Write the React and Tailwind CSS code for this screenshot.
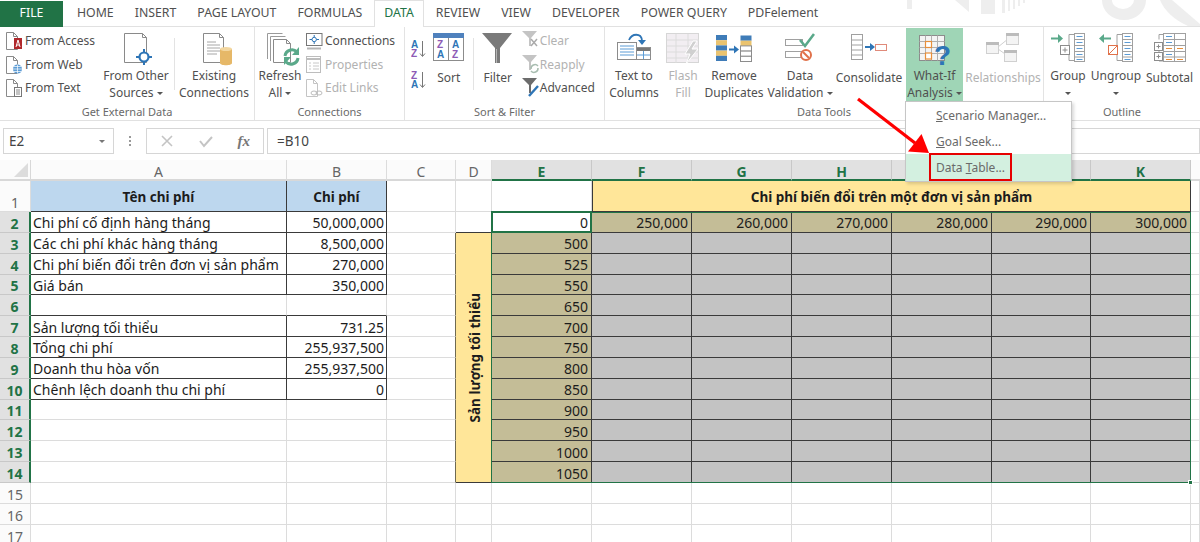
import React from "react";

const tabs = ["HOME", "INSERT", "PAGE LAYOUT", "FORMULAS", "DATA", "REVIEW", "VIEW", "DEVELOPER", "POWER QUERY", "PDFelement"];
const columns = ["A", "B", "C", "D", "E", "F", "G", "H", "I", "J", "K"];
const leftRows = {
  2: ["Chi phí cố định hàng tháng", "50,000,000"],
  3: ["Các chi phí khác hàng tháng", "8,500,000"],
  4: ["Chi phí biến đổi trên đơn vị sản phẩm", "270,000"],
  5: ["Giá bán", "350,000"],
  7: ["Sản lượng tối thiểu", "731.25"],
  8: ["Tổng chi phí", "255,937,500"],
  9: ["Doanh thu hòa vốn", "255,937,500"],
  10: ["Chênh lệch doanh thu chi phí", "0"],
};
const costs = ["250,000", "260,000", "270,000", "280,000", "290,000", "300,000"];
const volumes = [500, 525, 550, 650, 700, 750, 800, 850, 900, 950, 1000, 1050];

const grid = "border-r border-b border-[#dcdcdc]";
const dark = "border-r border-b border-[#3a3a3a]";

function Page({ x = 0.5, y = 0.5, w = 11, h = 17, stroke = "#8a8a8a" }) {
  return <path d={`M${x} ${y}h${w - 4}l4 4v${h - 4}h-${w}z M${x + w - 4} ${y}v4h4`} fill="#fff" stroke={stroke} />;
}

function FromAccessIcon() {
  return (
    <svg width="17" height="18" viewBox="0 0 17 18">
      <Page />
      <rect x="8" y="6" width="8" height="11" fill="#b0282c" />
      <path d="M10 15l2-7 2 7M10.8 13h2.4" stroke="#fff" fill="none" />
    </svg>
  );
}

function FromWebIcon() {
  return (
    <svg width="17" height="18" viewBox="0 0 17 18">
      <Page />
      <circle cx="11.5" cy="13" r="4.5" fill="#5b9bd5" />
      <path d="M7 13h9M11.5 8.5v9M8 10.5h7M8 15.5h7" stroke="#fff" strokeWidth=".7" />
    </svg>
  );
}

function FromTextIcon() {
  return (
    <svg width="17" height="18" viewBox="0 0 17 18">
      <Page />
      <rect x="8.5" y="8.5" width="7" height="9" fill="#fff" stroke="#777" />
      <path d="M10 11h4M10 13h4M10 15h4" stroke="#888" />
    </svg>
  );
}

function OtherSourcesIcon() {
  return (
    <svg width="34" height="32" viewBox="0 0 34 32">
      <Page x={5.5} y={0.5} w={22} h={29} />
      <circle cx="25" cy="24" r="4.5" fill="#fff" stroke="#2e75b6" strokeWidth="2.2" />
      <path d="M25 16v3M25 29v3M17 24h3M30 24h3" stroke="#2e75b6" strokeWidth="2" />
    </svg>
  );
}

function ExistingIcon() {
  return (
    <svg width="36" height="33" viewBox="0 0 36 33">
      <Page x={7.5} y={0.5} w={20} h={29} />
      <path d="M11 9h9M11 12h13M11 15h13M11 18h13M11 21h10" stroke="#a6a6a6" />
      <path d="M24 16h12v14c0 3-12 3-12 0z" fill="#e6b868" />
      <ellipse cx="30" cy="16" rx="6" ry="2" fill="#f3d7a0" />
    </svg>
  );
}

function RefreshIcon() {
  return (
    <svg width="40" height="33" viewBox="0 0 40 33">
      <g transform="translate(7 0)">
        <path d="M.5 26V.5h15M3.5 28V3.5h15" fill="none" stroke="#9a9a9a" />
        <Page x={6.5} y={6.5} w={17} h={23} />
        <path d="M18 23a7 7 0 0 1 12-4" fill="none" stroke="#5aa98a" strokeWidth="3" />
        <path d="M32 14v8h-7z" fill="#5aa98a" />
        <path d="M31 25a7 7 0 0 1-12 4" fill="none" stroke="#5aa98a" strokeWidth="3" />
        <path d="M17 32v-8h7z" fill="#5aa98a" />
      </g>
    </svg>
  );
}

function ConnectionsIcon() {
  return (
    <svg width="17" height="17" viewBox="0 0 17 17">
      <rect x=".5" y=".5" width="15.5" height="12" fill="#fff" stroke="#777" />
      <path d="M8.2 2v9M3.5 6.5h9.5" stroke="#2e75b6" />
      <circle cx="8.2" cy="6.5" r="2.2" fill="#fff" stroke="#2e75b6" />
      <path d="M1 15.5h14" stroke="#b5b5b5" strokeWidth="2" />
    </svg>
  );
}

function PropertiesIcon() {
  return (
    <svg width="17" height="17" viewBox="0 0 17 17">
      <rect x=".5" y=".5" width="14" height="16" fill="#fff" stroke="#bdbdbd" />
      <path d="M1 3h13" stroke="#bdbdbd" strokeWidth="2" />
      <path d="M3 7h2M3 10h2M3 13h2M7 7h6M7 10h6M7 13h6" stroke="#c8c8c8" />
    </svg>
  );
}

function EditLinksIcon() {
  return (
    <svg width="17" height="18" viewBox="0 0 17 18">
      <Page stroke="#c4c4c4" />
      <ellipse cx="8" cy="14" rx="3" ry="2" fill="#fff" stroke="#bdbdbd" />
      <ellipse cx="13" cy="14" rx="3" ry="2" fill="none" stroke="#bdbdbd" />
    </svg>
  );
}

function SortLettersIcon({ top, bottom, topColor, bottomColor }) {
  return (
    <svg width="16" height="20" viewBox="0 0 16 20">
      <text x="0" y="9" fontSize="10" fontWeight="700" fill={topColor} fontFamily="Liberation Sans">{top}</text>
      <text x="0" y="18" fontSize="10" fontWeight="700" fill={bottomColor} fontFamily="Liberation Sans">{bottom}</text>
      <path d="M11.5 2v15M9 14.5l2.5 3 2.5-3" fill="none" stroke="#777" />
    </svg>
  );
}

function SortIcon() {
  return (
    <svg width="32" height="29" viewBox="0 0 32 29">
      <rect x=".5" y=".5" width="30" height="27" fill="#fff" stroke="#8c8c8c" />
      <rect x="0" y="0" width="31" height="5" fill="#4f81bd" />
      <path d="M15.5 5v23" stroke="#8c8c8c" />
      <text x="4" y="15" fontSize="10" fontWeight="700" fill="#8e5ab5" fontFamily="Liberation Sans">Z</text>
      <text x="4" y="25" fontSize="10" fontWeight="700" fill="#2e75b6" fontFamily="Liberation Sans">A</text>
      <text x="19" y="15" fontSize="10" fontWeight="700" fill="#2e75b6" fontFamily="Liberation Sans">A</text>
      <text x="19" y="25" fontSize="10" fontWeight="700" fill="#8e5ab5" fontFamily="Liberation Sans">Z</text>
    </svg>
  );
}

function FilterIcon() {
  return (
    <svg width="31" height="31" viewBox="0 0 31 31">
      <path d="M0 0h30L18 15v15h-5V15z" fill="#7a7a7a" />
      <path d="M14.5 16v14" stroke="#b5b5b5" />
    </svg>
  );
}

function SmallFunnelIcon({ fill, children }) {
  return (
    <svg width="18" height="20" viewBox="0 0 18 20">
      <path d="M0 0h15l-6 7v8H7V7z" fill={fill} />
      {children}
    </svg>
  );
}

function TextColumnsIcon() {
  return (
    <svg width="34" height="27" viewBox="0 0 34 27">
      <rect x=".5" y="9.5" width="19" height="17" fill="#fff" stroke="#8c8c8c" />
      <path d="M3 13h14M3 16h14M3 19h14M3 22h14" stroke="#5b9bd5" />
      <path d="M12 7C15 0 24 0 25 7" fill="none" stroke="#2e75b6" strokeWidth="1.8" />
      <path d="M21 7h8l-4 5z" fill="#2e75b6" />
      <rect x="19.5" y="14.5" width="14" height="12" fill="#fff" stroke="#8c8c8c" />
      <rect x="20" y="15" width="13" height="3" fill="#777" />
      <path d="M26.5 18v8M20 22h13" stroke="#5b9bd5" />
    </svg>
  );
}

function FlashFillIcon() {
  return (
    <svg width="34" height="32" viewBox="0 0 34 32">
      <rect x=".5" y=".5" width="32" height="29" fill="#f2eef2" stroke="#d6d6d6" />
      <path d="M1 7h32M1 13h32M1 19h32M1 25h32M10 1v29M22 1v29" stroke="#dcdcdc" />
      <path d="M27 8l-8 13h5l-4 10 12-15h-6l5-8z" fill="#d0d0d0" stroke="#fff" />
    </svg>
  );
}

function RemoveDuplicatesIcon() {
  const rowsA = ["#3f7cb8", "#eac36f", "#3f7cb8", "#eac36f", "#3f7cb8"];
  const rowsB = ["#3f7cb8", "#eac36f", "#fff", "#fff", "#fff"];
  return (
    <svg className="mt-[2px]" width="36" height="27" viewBox="0 0 36 27">
      {rowsA.map((c, i) => (
        <rect key={i} x="0" y={i * 5.2} width="11" height="5.2" fill={c} />
      ))}
      {rowsB.map((c, i) => (
        <rect key={i} x="24.5" y={i * 5.2 + 0.5} width="11" height="5.2" fill={c} stroke={i < 2 ? "none" : "#8c8c8c"} />
      ))}
      <path d="M13 14.5h6" stroke="#2e75b6" strokeWidth="2" />
      <path d="M18 10.5l5 4-5 4z" fill="#2e75b6" />
    </svg>
  );
}

function DataValidationIcon() {
  return (
    <svg width="30" height="30" viewBox="0 0 30 30">
      <rect x=".5" y="6.5" width="17" height="6" fill="#fff" stroke="#a0a0a0" />
      <rect x=".5" y="18.5" width="17" height="6" fill="#fff" stroke="#a0a0a0" />
      <path d="M15 7l5 6 9-12" fill="none" stroke="#5aa98a" strokeWidth="2.6" />
      <circle cx="21" cy="22" r="5" fill="#fff" stroke="#e0714a" strokeWidth="2" />
      <path d="M18 19l6 6" stroke="#e0714a" strokeWidth="2" />
    </svg>
  );
}

function ConsolidateIcon() {
  return (
    <svg className="mt-px" width="36" height="27" viewBox="0 0 36 27">
      <rect x=".5" y=".5" width="11" height="25" fill="#fff" stroke="#a0a0a0" />
      <path d="M1 6h10M1 11h10M1 16h10M1 21h10" stroke="#a0a0a0" />
      <path d="M14 13h6" stroke="#2e75b6" strokeWidth="2" />
      <path d="M19 9l5 4-5 4z" fill="#2e75b6" />
      <rect x="24.5" y="10.5" width="11" height="6" fill="#fff" stroke="#e08a7a" />
    </svg>
  );
}

function WhatIfIcon() {
  return (
    <svg className="mt-[2px] overflow-visible" width="32" height="31" viewBox="0 0 32 31">
      <rect x=".5" y=".5" width="25" height="25" fill="#f4f4f4" stroke="#8c8c8c" />
      <path d="M.5 6.5h25M.5 12.5h25M.5 18.5h25M6.5 .5v25M12.5 .5v25M18.5 .5v25" stroke="#b0b0b0" />
      <rect x="6.5" y="6.5" width="6" height="6" fill="#fff" stroke="#e88f3a" strokeWidth="1.2" />
      <rect x="6.5" y="18" width="6" height="6" fill="#fff" stroke="#e88f3a" strokeWidth="1.2" />
      <text x="15" y="30" fontSize="28" fontWeight="700" fill="#2e75b6" fontFamily="Liberation Sans">?</text>
    </svg>
  );
}

function RelationshipsIcon() {
  return (
    <svg width="34" height="30" viewBox="0 0 34 30">
      <path d="M12 14l10-8M12 16l10 7" stroke="#d0d0d0" />
      <rect x=".5" y="9.5" width="12" height="11" fill="#f4f4f4" stroke="#d0d0d0" />
      <rect x="0" y="9" width="13" height="3" fill="#bcbcbc" />
      <rect x="20.5" y=".5" width="12" height="11" fill="#f4f4f4" stroke="#d0d0d0" />
      <rect x="20" y="0" width="13" height="3" fill="#bcbcbc" />
      <rect x="18.5" y="17.5" width="12" height="11" fill="#f4f4f4" stroke="#d0d0d0" />
      <rect x="18" y="17" width="13" height="3" fill="#bcbcbc" />
    </svg>
  );
}

function ListColumn({ x }) {
  return (
    <>
      <rect x={x + 0.5} y=".5" width="10" height="28" fill="#fff" stroke="#a0a0a0" />
      <path d={`M${x} 6.5h11M${x} 12.5h11M${x} 18.5h11M${x} 24h11`} stroke="#a0a0a0" />
      <path d={`M${x + 2.5} 3.5h6M${x + 2.5} 9.5h6M${x + 2.5} 15.5h6M${x + 2.5} 21.5h6M${x + 2.5} 26.5h6`} stroke="#5b9bd5" />
    </>
  );
}

function GroupIcon() {
  return (
    <svg width="34" height="29" viewBox="0 0 34 29">
      <path d="M24 1.5h-6v26h6" fill="none" stroke="#a0a0a0" />
      <path d="M0 5.5h8" stroke="#5aa98a" strokeWidth="2" />
      <path d="M7 1l5 4.5-5 4.5z" fill="#5aa98a" />
      <rect x="9.5" y="12.5" width="9" height="9" fill="#fff" stroke="#8c8c8c" />
      <path d="M11.5 17h5M14 14.5v5" stroke="#8c8c8c" />
      <ListColumn x={23} />
    </svg>
  );
}

function UngroupIcon() {
  return (
    <svg width="34" height="29" viewBox="0 0 34 29">
      <path d="M24 1.5h-6v26h6" fill="none" stroke="#a0a0a0" />
      <path d="M4 5.5h8" stroke="#5aa98a" strokeWidth="2" />
      <path d="M5 1L0 5.5 5 10z" fill="#5aa98a" />
      <rect x="9.5" y="12.5" width="9" height="9" fill="#fff" stroke="#e0714a" />
      <path d="M10 21l8-8" stroke="#e0714a" />
      <ListColumn x={23} />
    </svg>
  );
}

function SubtotalIcon() {
  return (
    <svg width="32" height="29" viewBox="0 0 32 29">
      <path d="M9 1.5H5v5M5 18v10h5" fill="none" stroke="#a0a0a0" />
      <rect x=".5" y="9.5" width="8" height="8" fill="#fff" stroke="#8c8c8c" />
      <rect x=".5" y="19.5" width="8" height="8" fill="#fff" stroke="#8c8c8c" />
      <path d="M2.5 13.5h4M4.5 11.5v4M2.5 23.5h4M4.5 21.5v4" stroke="#8c8c8c" />
      <rect x="9.5" y=".5" width="22" height="28" fill="#fff" stroke="#a0a0a0" />
      <path d="M9 6.5h23M9 12.5h23M9 18.5h23M9 24h23M20.5 1v28" stroke="#a0a0a0" />
      <path d="M12 3.5h6M12 9.5h6M12 21.5h6" stroke="#5b9bd5" />
      <path d="M23 15.5h6M23 26.5h6M12 15.5h6M12 26.5h6" stroke="#e88f3a" />
    </svg>
  );
}

function Caret() {
  return <span className="inline-block align-middle ml-[3px] w-0 h-0 border-x-[3px] border-t-[3px] border-x-transparent border-t-[#555]" />;
}

function BigButton({ w, icon, lines, caret, caretLine, dim, active }) {
  return (
    <div className={`flex flex-col items-center shrink-0 h-[73px] pt-[5px] ${active ? "bg-[#9fd5b6]" : ""}`} style={{ width: w }}>
      <div className="h-[36px] flex items-start justify-center">{icon}</div>
      <div className={`text-center leading-[17px] whitespace-nowrap ${dim ? "text-[#b2b2b2]" : "text-[#505050]"}`}>
        <div>{lines[0]}</div>
        <div>
          {lines[1]}
          {caret && lines[1] ? <Caret /> : null}
        </div>
        {caretLine ? <div className="h-[17px] -ml-[3px]"><Caret /></div> : null}
      </div>
    </div>
  );
}

function SmallButton({ icon, label, dim, iconW = "w-[18px]" }) {
  return (
    <div className="flex items-center h-[23.5px] whitespace-nowrap">
      <span className={`${iconW} shrink-0 flex items-center`}>{icon}</span>
      <span className={dim ? "text-[#b2b2b2]" : "text-[#505050]"}>{label}</span>
    </div>
  );
}

function RibbonGroup({ w, label, children, last }) {
  return (
    <div className={`relative flex flex-col justify-between shrink-0 h-[93px] ${last ? "" : "border-r border-[#e3e3e3]"}`} style={{ width: w }}>
      <div className="flex pt-px">{children}</div>
      <div className="text-center text-[11px] leading-[14px] text-[#6a6a6a] pb-px">{label}</div>
    </div>
  );
}

function Ribbon() {
  return (
    <div className="flex h-[94px] border-b border-[#e1e1e1] text-[12px]">
      <RibbonGroup w={255} label="Get External Data">
        <div className="ml-[6px] w-[97px] pt-[1.5px]">
          <SmallButton icon={<FromAccessIcon />} label="From Access" iconW="w-[19px]" />
          <SmallButton icon={<FromWebIcon />} label="From Web" iconW="w-[19px]" />
          <SmallButton icon={<FromTextIcon />} label="From Text" iconW="w-[19px]" />
        </div>
        <BigButton w={66} icon={<OtherSourcesIcon />} lines={["From Other", "Sources"]} caret />
        <div className="ml-[5px] mr-[4px] mt-[10px] h-[52px] border-l border-[#e3e3e3]" />
        <BigButton w={70} icon={<ExistingIcon />} lines={["Existing", "Connections"]} />
      </RibbonGroup>
      <RibbonGroup w={150} label="Connections">
        <BigButton w={50} icon={<RefreshIcon />} lines={["Refresh", "All"]} caret />
        <div className="ml-px w-[90px] pt-[1.5px]">
          <SmallButton icon={<ConnectionsIcon />} label="Connections" iconW="w-[19px]" />
          <SmallButton icon={<PropertiesIcon />} label="Properties" iconW="w-[19px]" dim />
          <SmallButton icon={<EditLinksIcon />} label="Edit Links" iconW="w-[19px]" dim />
        </div>
      </RibbonGroup>
      <RibbonGroup w={200} label="Sort & Filter">
        <div className="ml-[6px] w-[22px] pt-[11px] flex flex-col gap-[11px]">
          <SortLettersIcon top="A" bottom="Z" topColor="#2e75b6" bottomColor="#8e5ab5" />
          <SortLettersIcon top="Z" bottom="A" topColor="#8e5ab5" bottomColor="#2e75b6" />
        </div>
        <BigButton w={32} icon={<SortIcon />} lines={["Sort", ""]} />
        <div className="ml-[8px] mt-[10px] h-[52px] border-l border-[#e3e3e3]" />
        <BigButton w={48} icon={<FilterIcon />} lines={["Filter", ""]} />
        <div className="w-[83px] pt-[1.5px]">
          <SmallButton
            dim
            label="Clear"
            icon={
              <SmallFunnelIcon fill="#c4c4c4">
                <path d="M9 8l6 7M15 8l-6 7" stroke="#aaa" strokeWidth="1.5" />
              </SmallFunnelIcon>
            }
          />
          <SmallButton
            dim
            label="Reapply"
            icon={
              <SmallFunnelIcon fill="#c4c4c4">
                <path d="M9 14a4 4 0 0 1 7-3M16 13a4 4 0 0 1-7 3" fill="none" stroke="#a8bdb0" strokeWidth="1.5" />
              </SmallFunnelIcon>
            }
          />
          <SmallButton
            label="Advanced"
            icon={
              <SmallFunnelIcon fill="#6c6c6c">
                <path d="M7 18L16 8" stroke="#2e75b6" strokeWidth="2.4" />
              </SmallFunnelIcon>
            }
          />
        </div>
      </RibbonGroup>
      <RibbonGroup w={439} label="Data Tools">
        <BigButton w={58} icon={<TextColumnsIcon />} lines={["Text to", "Columns"]} />
        <BigButton w={40} icon={<FlashFillIcon />} lines={["Flash", "Fill"]} dim />
        <BigButton w={62} icon={<RemoveDuplicatesIcon />} lines={["Remove", "Duplicates"]} />
        <BigButton w={70} icon={<DataValidationIcon />} lines={["Data", "Validation"]} caret />
        <BigButton w={68} icon={<ConsolidateIcon />} lines={["Consolidate", ""]} />
        <div className="w-[3px]" />
        <BigButton w={57} icon={<WhatIfIcon />} lines={["What-If", "Analysis"]} caret active />
        <BigButton w={80} icon={<RelationshipsIcon />} lines={["Relationships", ""]} dim />
      </RibbonGroup>
      <RibbonGroup w={156} label="Outline" last>
        <BigButton w={48} icon={<GroupIcon />} lines={["Group", ""]} caretLine />
        <BigButton w={48} icon={<UngroupIcon />} lines={["Ungroup", ""]} caretLine />
        <BigButton w={59} icon={<SubtotalIcon />} lines={["Subtotal", ""]} />
      </RibbonGroup>
    </div>
  );
}

function Watermark() {
  return (
    <svg className="absolute right-0 top-0 pointer-events-none" width="300" height="26" viewBox="900 0 300 26">
      <g fill="#eeeeee">
        <rect x="907" y="0" width="5" height="9" />
        <path d="M955 0h14v12z" />
        <rect x="981" y="0" width="14" height="14" />
        <path d="M1002 0h3v13h-3zM1008 0h2v11h-2zM1013 0h2v9h-2zM1018 0h2v6h-2zM1023 0h2v3h-2z" />
        <path d="M1102 0h44a22 20 0 0 1-44 0zM1112 0a11 9 0 0 0 22 0z" fillRule="evenodd" />
        <path d="M1160 0h12l28 24v2h-12c-14-6-24-16-28-26z" />
      </g>
      <path d="M1178 0l22 18M1188 0l12 9" stroke="#fff" strokeWidth="2" />
    </svg>
  );
}

function HeaderCell({ label, on }) {
  return (
    <div
      className={`flex items-center justify-center pt-[3px] text-[14px] ${
        on
          ? "bg-[#e1e1e1] text-[#217346] font-bold border-r border-b-2 border-r-[#c8c8c8] border-b-[#217346]"
          : "bg-[#fbfbfb] text-[#666] border-r border-b-2 border-r-[#dcdcdc] border-b-[#d8d8d8]"
      }`}
    >
      {label}
    </div>
  );
}

function RowHead({ n, on }) {
  return (
    <div
      className={`flex items-end justify-center text-[14px] leading-[16px] ${
        on
          ? "bg-[#e1e1e1] text-[#217346] font-bold border-r-2 border-b border-r-[#217346] border-b-[#c8c8c8]"
          : "bg-[#fbfbfb] text-[#666] border-r border-b border-[#dcdcdc]"
      }`}
    >
      {n}
    </div>
  );
}

function Cell({ className = grid, bg = "", pad = "px-[3px]", right, children }) {
  return (
    <div className={`flex items-center ${pad} pt-[3px] leading-[16px] overflow-visible whitespace-nowrap text-[14px] text-[#1c1c1c] ${className} ${bg} ${right ? "justify-end" : ""}`}>
      {children}
    </div>
  );
}

function TitleCell({ children }) {
  return (
    <div className={`flex items-center justify-center pt-[3px] bg-[#bdd7ee] text-[13.5px] font-bold text-[#1c1c1c] ${dark}`}>
      {children}
    </div>
  );
}

function Sheet() {
  const rows = [];
  rows.push(<div key="corner" className="flex items-end justify-end pr-[2px] pb-[2px] bg-[#fbfbfb] border-r border-b-2 border-[#d8d8d8]"><div className="w-0 h-0 border-l-[14px] border-b-[14px] border-l-transparent border-b-[#dcdcdc]" /></div>);
  columns.forEach((c, i) => rows.push(<HeaderCell key={c} label={c} on={i >= 4} />));
  rows.push(<div key="h-end" className="bg-[#fbfbfb] border-b-2 border-[#d8d8d8]" />);

  rows.push(<RowHead key="r1" n={1} />);
  rows.push(<TitleCell key="a1">Tên chi phí</TitleCell>);
  rows.push(<TitleCell key="b1">Chi phí</TitleCell>);
  rows.push(<Cell key="c1" />);
  rows.push(<Cell key="d1" />);
  rows.push(<Cell key="e1" />);
  rows.push(
    <div key="f1" className="col-span-6 flex items-center justify-center pt-[3px] bg-[#ffe699] text-[13.5px] font-bold text-[#1c1c1c] border-r border-b border-l border-[#3a3a3a]">
      Chi phí biến đổi trên một đơn vị sản phẩm
    </div>
  );
  rows.push(<div key="f1-end" className={grid} />);

  for (let n = 2; n <= 14; n++) {
    const left = leftRows[n];
    rows.push(<RowHead key={`r${n}`} n={n} on />);
    if (left) {
      rows.push(<Cell key={`a${n}`} className={dark} pad="px-[2px]">{left[0]}</Cell>);
      rows.push(<Cell key={`b${n}`} className={dark} pad="px-[2px]" right>{left[1]}</Cell>);
    } else if (n === 6) {
      // blank row between the two blocks: only its bottom edge is dark
      rows.push(<Cell key="a6" className="border-r border-b border-r-[#dcdcdc] border-b-[#3a3a3a]" />);
      rows.push(<Cell key="b6" className="border-r border-b border-r-[#dcdcdc] border-b-[#3a3a3a]" />);
    } else {
      rows.push(<Cell key={`a${n}`} />);
      rows.push(<Cell key={`b${n}`} />);
    }
    rows.push(<Cell key={`c${n}`} className={n >= 3 ? "border-b border-r border-b-[#dcdcdc] border-r-[#6f6a52]" : grid} />);
    if (n === 2) rows.push(<Cell key="d2" className="border-r border-b border-r-[#dcdcdc] border-b-[#3a3a3a]" />);
    if (n === 3) {
      rows.push(
        <div key="d3" className="row-span-12 flex items-center justify-center pl-[3px] bg-[#ffe699] border-r border-b border-[#3a3a3a]">
          <span className="[writing-mode:vertical-rl] rotate-180 text-[13.5px] font-bold text-[#1c1c1c] whitespace-nowrap">Sản lượng tối thiểu</span>
        </div>
      );
    }
    if (n === 2) {
      rows.push(<Cell key="e2" className={dark} right>0</Cell>);
      costs.forEach((c) => rows.push(<Cell key={c} className={dark} bg="bg-[#c4bd97]" right>{c}</Cell>));
    } else {
      rows.push(<Cell key={`e${n}`} className={dark} bg="bg-[#c4bd97]" right>{volumes[n - 3]}</Cell>);
      costs.forEach((c) => rows.push(<Cell key={`${c}-${n}`} className={dark} bg="bg-[#c3c3c3]" />));
    }
    rows.push(<div key={`end${n}`} className={grid} />);
  }

  for (let n = 15; n <= 17; n++) {
    rows.push(<RowHead key={`r${n}`} n={n} />);
    columns.forEach((c) => rows.push(<Cell key={`${c}${n}`} />));
    rows.push(<div key={`end${n}`} className={grid} />);
  }

  return (
    <div className="relative">
      <div className="grid grid-cols-[31px_256px_100px_69px_36px_100px_100px_100px_100px_100px_99px_100px_9px] grid-rows-[21px_31px_repeat(13,20.85px)_21px_21px_21px]">
        {rows}
      </div>
      {/* selection frame E2:K14 */}
      <div className="absolute left-[491px] top-[52px] w-[700px] h-[271px] border border-[#217346] pointer-events-none" />
      <div className="absolute left-[491px] top-[51px] w-[101px] h-[22px] border-2 border-[#217346] pointer-events-none" />
      <div className="absolute left-[1188px] top-[320px] w-[5px] h-[5px] bg-[#217346] border border-white pointer-events-none" />
    </div>
  );
}

function Menu() {
  return (
    <div className="absolute left-[905px] top-[101px] w-[167px] h-[81px] bg-white border border-[#c6c6c6] shadow-[2px_2px_3px_rgba(0,0,0,0.15)] text-[12px] text-[#6a6a6a] leading-[28px]">
      <div className="h-[26px] pl-[30px]"><span className="underline">S</span>cenario Manager...</div>
      <div className="h-[26px] pl-[30px]"><span className="underline">G</span>oal Seek...</div>
      <div className="h-[27px] pl-[30px] bg-[#d3f0e0]">Data <span className="underline">T</span>able...</div>
      <div className="absolute left-[23px] top-[51px] w-[83px] h-[28px] border-[2.5px] border-[#e60000]" />
    </div>
  );
}

function Arrow() {
  return (
    <svg className="absolute left-[850px] top-[92px] pointer-events-none" width="90" height="70" viewBox="850 92 90 70">
      <path d="M858 99L915 143" stroke="#ff0000" strokeWidth="3.2" />
      <path d="M929 153L908 151.5L921.5 134z" fill="#ff0000" />
    </svg>
  );
}

export default function App() {
  return (
    <div className="relative w-[1200px] h-[542px] overflow-hidden bg-white font-['Noto_Sans','Open_Sans',sans-serif]">
      <div className="relative flex items-center h-[27px] border-b border-[#e1e1e1] text-[12.3px] text-[#505050]">
        <Watermark />
        <div className="w-[63px] h-[26px] mt-px bg-[#217346] text-white flex items-center justify-center">FILE</div>
        <div className="relative flex items-center gap-[21px] ml-[14px]">
          {tabs.map((t) =>
            t === "DATA" ? (
              <div key={t} className="-mx-[9px] px-[9px] h-[27px] flex items-center bg-white border-x border-t border-[#e1e1e1] text-[#217346]">{t}</div>
            ) : (
              <div key={t}>{t}</div>
            )
          )}
        </div>
      </div>
      <Ribbon />
      <div className="flex items-center h-[39px] pb-[3px] pt-[4px] text-[13.5px] text-[#444]">
        <div className="ml-[3px] w-[111px] h-[26px] border border-[#d6d6d6] flex items-center justify-between pl-[5px] pr-[8px]">
          E2
          <span className="w-0 h-0 border-x-[3px] border-t-[3px] border-x-transparent border-t-[#777]" />
        </div>
        <div className="w-[32px] flex flex-col items-center gap-[2px]">
          <span className="w-[2px] h-[2px] bg-[#999]" />
          <span className="w-[2px] h-[2px] bg-[#999]" />
          <span className="w-[2px] h-[2px] bg-[#999]" />
        </div>
        <div className="w-[118px] h-[26px] border border-[#d6d6d6] flex items-center justify-between px-[13px]">
          <svg width="14" height="14" viewBox="0 0 14 14"><path d="M2 2l10 10M12 2L2 12" stroke="#c4c4c4" strokeWidth="1.6" /></svg>
          <svg width="14" height="14" viewBox="0 0 14 14"><path d="M1 7l4 5 8-9" fill="none" stroke="#c4c4c4" strokeWidth="2" /></svg>
          <span className="font-['Liberation_Serif',serif] italic font-bold text-[15px] text-[#777]">fx</span>
        </div>
        <div className="ml-[3px] flex-1 h-[26px] border border-[#d6d6d6] flex items-center pl-[9px]">=B10</div>
      </div>
      <Sheet />
      <Menu />
      <Arrow />
    </div>
  );
}
